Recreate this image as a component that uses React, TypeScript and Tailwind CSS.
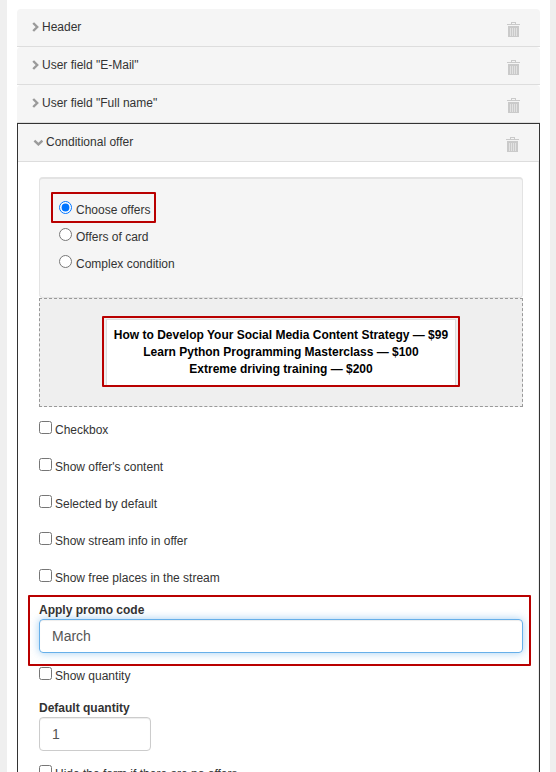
import React, { useState } from 'react';

const collapsedFields = ['Header', 'User field "E-Mail"', 'User field "Full name"'];

const offerModes = ['Choose offers', 'Offers of card', 'Complex condition'];

const offers = [
  { title: 'How to Develop Your Social Media Content Strategy', price: 99 },
  { title: 'Learn Python Programming Masterclass', price: 100 },
  { title: 'Extreme driving training', price: 200 },
];

const offerOptions = [
  'Checkbox',
  "Show offer's content",
  'Selected by default',
  'Show stream info in offer',
  'Show free places in the stream',
];

function ChevronRight() {
  return (
    <svg width="7" height="10" viewBox="0 0 7 10" fill="none" stroke="#9a9a9a" strokeWidth="2.4">
      <path d="M1.2 1 L5.2 5 L1.2 9" />
    </svg>
  );
}

function ChevronDown() {
  return (
    <svg width="10" height="8" viewBox="0 0 10 8" fill="none" stroke="#9a9a9a" strokeWidth="2.4">
      <path d="M1.4 2.6 L5.4 6.4 L9.4 2.6" />
    </svg>
  );
}

function TrashIcon() {
  return (
    <svg width="13" height="15" viewBox="0 0 13 15" fill="#cacaca" shapeRendering="crispEdges">
      <path d="M4 0h5v2h4v1H0V2h4zM5 1v1h3V1z" fillRule="evenodd" />
      <path d="M1 4h11v11H1z" fill="#e2e2e2" />
      <path d="M1 4h11v11H1zM3 6v8h1V6zM5 6v8h1V6zM7 6v8h1V6zM9 6v8h1V6z" fillRule="evenodd" />
    </svg>
  );
}

function FieldHeader({ title, open = false }: { title: string; open?: boolean }) {
  return (
    <div className="flex h-[38px] items-start justify-between rounded-t-sm border-b border-[#dddddd] bg-[#f5f5f5] pr-5 pl-[15px]">
      <button type="button" className="flex h-9 items-center gap-[3px]">
        {open ? <ChevronDown /> : <ChevronRight />}
        <span>{title}</span>
      </button>
      <button type="button" aria-label="Delete" className="mt-[13px]">
        <TrashIcon />
      </button>
    </div>
  );
}

function CheckRow({ label }: { label: string }) {
  return (
    <label className="flex items-start gap-[3px]">
      <input type="checkbox" className="size-[13px]" />
      <span className="pt-px">{label}</span>
    </label>
  );
}

// red frame drawn around whatever the reader should look at
function Highlight({ className }: { className: string }) {
  return <div className={`pointer-events-none absolute rounded-[1px] border-2 border-[#b90000] ${className}`} />;
}

export default function App() {
  const [mode, setMode] = useState(offerModes[0]);
  const [promo, setPromo] = useState('March');
  const [quantity, setQuantity] = useState('1');

  return (
    <div className="h-screen overflow-hidden bg-[#efefef] pr-[6px] pl-[7px] font-['Liberation_Sans',Arial,sans-serif] text-xs leading-[17px] text-[#333333]">
      <div className="min-h-full bg-white px-[10px] pt-[9px]">
        {collapsedFields.map((title) => (
          <FieldHeader key={title} title={title} />
        ))}

        <section className="border border-[#333333]">
          <FieldHeader title="Conditional offer" open />

          <div className="border-r border-[#eeeeee] pt-[15px] pr-[15px] pb-5 pl-[21px]">
            <fieldset className="rounded border border-t-2 border-[#e3e3e3] bg-[#f5f5f5] px-[19px] pt-[22px] pb-6">
              <div className="flex flex-col items-start gap-[9px]">
                {offerModes.map((item) => (
                  <label key={item} className="relative flex items-start gap-1">
                    <input
                      type="radio"
                      name="mode"
                      className="size-[13px]"
                      checked={mode === item}
                      onChange={() => setMode(item)}
                    />
                    <span className="pt-px">{item}</span>
                    {item === offerModes[0] && <Highlight className="-top-[9px] -right-[5px] -bottom-1 -left-2" />}
                  </label>
                ))}
              </div>
            </fieldset>

            <div className="flex justify-center border border-dashed border-[#999999] bg-[#efefef] py-5">
              <div className="relative border border-[#dddddd] bg-white p-[7px] text-center font-bold text-black">
                {offers.map((offer) => (
                  <p key={offer.title}>
                    {offer.title} — ${offer.price}
                  </p>
                ))}
                <Highlight className="-inset-x-[5px] -top-1 -bottom-[2px]" />
              </div>
            </div>

            <div className="mt-[14px] flex flex-col items-start gap-[19px]">
              {offerOptions.map((label) => (
                <CheckRow key={label} label={label} />
              ))}
            </div>

            <div className="relative my-[14px]">
              <label htmlFor="promo" className="block pt-px font-bold">
                Apply promo code
              </label>
              <input
                id="promo"
                type="text"
                value={promo}
                onChange={(e) => setPromo(e.target.value)}
                className="block h-[34px] w-full rounded border border-[#66afe9] px-3 text-sm text-[#555555] shadow-[inset_0_1px_1px_rgba(0,0,0,0.075),0_0_8px_rgba(102,175,233,0.6)] outline-none"
              />
              <Highlight className="-top-[6px] -right-2 -bottom-[13px] -left-[11px]" />
            </div>

            <CheckRow label="Show quantity" />

            <div className="my-[14px]">
              <label htmlFor="quantity" className="block pt-px font-bold">
                Default quantity
              </label>
              <input
                id="quantity"
                type="text"
                value={quantity}
                onChange={(e) => setQuantity(e.target.value)}
                className="block h-[34px] w-28 rounded border border-[#cccccc] px-3 text-sm text-[#555555] shadow-[inset_0_1px_1px_rgba(0,0,0,0.075)] outline-none"
              />
            </div>

            <CheckRow label="Hide the form if there are no offers" />
          </div>
        </section>
      </div>
    </div>
  );
}
